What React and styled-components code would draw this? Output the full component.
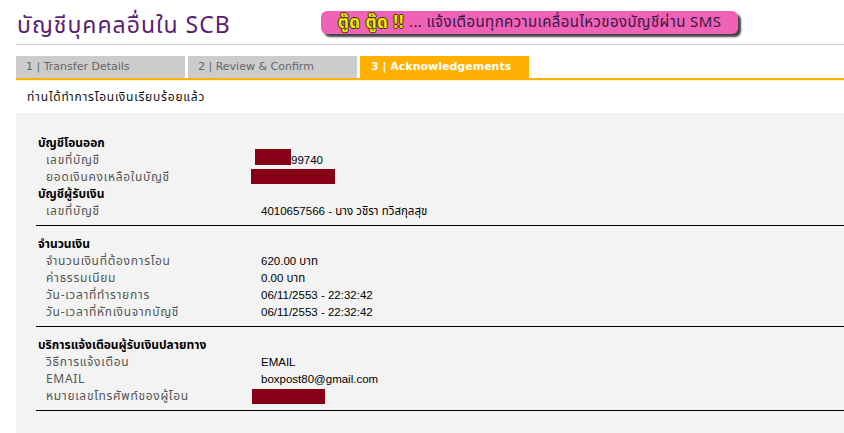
import React from "react";
import styled, { createGlobalStyle } from "styled-components";

const GlobalStyle = createGlobalStyle`
  html, body {
    margin: 0;
    padding: 0;
    background: #fff;
  }
  body {
    font-family: Tahoma, "Noto Sans Thai", Loma, Garuda, "DejaVu Sans", sans-serif;
  }
`;

const thai = `Tahoma, "Noto Sans Thai", Loma, Garuda, "DejaVu Sans", sans-serif`;

const Page = styled.div`
  width: 844px;
  height: 433px;
  overflow: hidden;
  padding-left: 16px;
  box-sizing: border-box;
  display: flex;
  flex-direction: column;
`;

const Header = styled.div`
  display: flex;
  align-items: flex-start;
  height: 45px;
  border-bottom: 1px solid #cfcfcf;
  box-sizing: border-box;
`;

const Title = styled.h1`
  margin: 11px 0 0 1px;
  width: 304px;
  font-family: ${thai};
  font-weight: normal;
  font-size: 23px;
  letter-spacing: 1px;
  line-height: 30px;
  color: #5b1e72;
  white-space: nowrap;
`;

const Banner = styled.div`
  margin-top: 11px;
  width: 417px;
  height: 23px;
  border-radius: 6px;
  background: #ef62b5;
  box-shadow: 3px 3px 2px #444;
  display: flex;
  align-items: center;
  justify-content: center;
  gap: 5px;
  white-space: nowrap;
`;

const Beep = styled.span`
  font-family: ${thai};
  font-weight: bold;
  font-size: 17px;
  letter-spacing: 0.5px;
  color: #f2e600;
  text-shadow: 1px 0 0 #3b3300, -1px 0 0 #3b3300, 0 1px 0 #3b3300,
    0 -1px 0 #3b3300;
`;

const BannerText = styled.span`
  font-family: ${thai};
  font-size: 15px;
  letter-spacing: 0.4px;
  color: #3a1745;
`;

const Tabs = styled.div`
  display: flex;
  gap: 3px;
  margin-top: 11px;
  border-bottom: 2px solid #ffb000;
`;

const Tab = styled.div`
  width: 169px;
  height: 22px;
  box-sizing: border-box;
  padding-left: ${(p) => (p.$active ? "11px" : "10px")};
  background: ${(p) => (p.$active ? "#ffb000" : "#cccccc")};
  color: ${(p) => (p.$active ? "#fff" : "#666")};
  font-family: Verdana, "DejaVu Sans", sans-serif;
  font-weight: ${(p) => (p.$active ? "bold" : "normal")};
  font-size: 11px;
  line-height: 22px;
  white-space: nowrap;
`;

const Notice = styled.div`
  height: 33px;
  border-top: 1px solid #fff6cc;
  box-sizing: border-box;
  padding-left: 11px;
  font-family: ${thai};
  font-size: 12px;
  letter-spacing: 0.8px;
  line-height: 33px;
  color: #111;
`;

const Panel = styled.div`
  flex: 1;
  background: #f3f3f3;
  padding-top: 12px;
`;

const Section = styled.div`
  margin-left: 20px;
  padding: 10px 0 5px;
  border-bottom: 1px solid #000;
`;

const Heading = styled.div`
  padding-left: 2px;
  font-family: ${thai};
  font-weight: bold;
  font-size: 12px;
  line-height: 17px;
  color: #000;
  white-space: nowrap;
`;

const Row = styled.div`
  display: grid;
  grid-template-columns: 215px 1fr;
  padding-left: 10px;
  height: 17px;
  align-items: center;
`;

const Label = styled.span`
  font-family: ${thai};
  font-size: 12px;
  letter-spacing: 0.7px;
  line-height: 17px;
  color: #555;
  white-space: nowrap;
`;

const Value = styled.span`
  display: flex;
  align-items: center;
  font-family: "Liberation Sans", Arial, ${thai};
  font-size: 11.5px;
  line-height: 17px;
  color: #000;
  white-space: nowrap;
`;

const Redacted = styled.span`
  display: inline-block;
  width: ${(p) => p.$w}px;
  height: ${(p) => p.$h || 16}px;
  margin-left: ${(p) => p.$shift}px;
  margin-top: ${(p) => p.$top || 0}px;
  background: #850017;
`;

const sections = [
  [
    { heading: "บัญชีโอนออก" },
    { label: "เลขที่บัญชี", redact: { w: 36, shift: -6, top: -7 }, value: "99740" },
    { label: "ยอดเงินคงเหลือในบัญชี", redact: { w: 84, shift: -10, h: 15, top: -3 } },
    { heading: "บัญชีผู้รับเงิน" },
    { label: "เลขที่บัญชี", value: "4010657566 - นาง วชิรา ทวิสกุลสุข" },
  ],
  [
    { heading: "จำนวนเงิน" },
    { label: "จำนวนเงินที่ต้องการโอน", value: "620.00 บาท" },
    { label: "ค่าธรรมเนียม", value: "0.00 บาท" },
    { label: "วัน-เวลาที่ทำรายการ", value: "06/11/2553 - 22:32:42" },
    { label: "วัน-เวลาที่หักเงินจากบัญชี", value: "06/11/2553 - 22:32:42" },
  ],
  [
    { heading: "บริการแจ้งเตือนผู้รับเงินปลายทาง" },
    { label: "วิธีการแจ้งเตือน", value: "EMAIL" },
    { label: "EMAIL", value: "boxpost80@gmail.com" },
    { label: "หมายเลขโทรศัพท์ของผู้โอน", redact: { w: 73, shift: -9, h: 15, top: 0 } },
  ],
];

const tabs = ["1 | Transfer Details", "2 | Review & Confirm", "3 | Acknowledgements"];

const App = () => {
  return (
    <Page>
      <GlobalStyle />
      <Header>
        <Title>บัญชีบุคคลอื่นใน SCB</Title>
        <Banner>
          <Beep>ตู๊ด ตู๊ด !!</Beep>
          <BannerText>... แจ้งเตือนทุกความเคลื่อนไหวของบัญชีผ่าน SMS</BannerText>
        </Banner>
      </Header>
      <Tabs>
        {tabs.map((t, i) => (
          <Tab key={t} $active={i === 2}>
            {t}
          </Tab>
        ))}
      </Tabs>
      <Notice>ท่านได้ทำการโอนเงินเรียบร้อยแล้ว</Notice>
      <Panel>
        {sections.map((rows, si) => (
          <Section key={si}>
            {rows.map((r, ri) =>
              r.heading ? (
                <Heading key={ri}>{r.heading}</Heading>
              ) : (
                <Row key={ri}>
                  <Label>{r.label}</Label>
                  <Value>
                    {r.redact && (
                      <Redacted
                        $w={r.redact.w}
                        $h={r.redact.h}
                        $shift={r.redact.shift}
                        $top={r.redact.top}
                      />
                    )}
                    {r.value}
                  </Value>
                </Row>
              )
            )}
          </Section>
        ))}
      </Panel>
    </Page>
  );
};

export default App;
